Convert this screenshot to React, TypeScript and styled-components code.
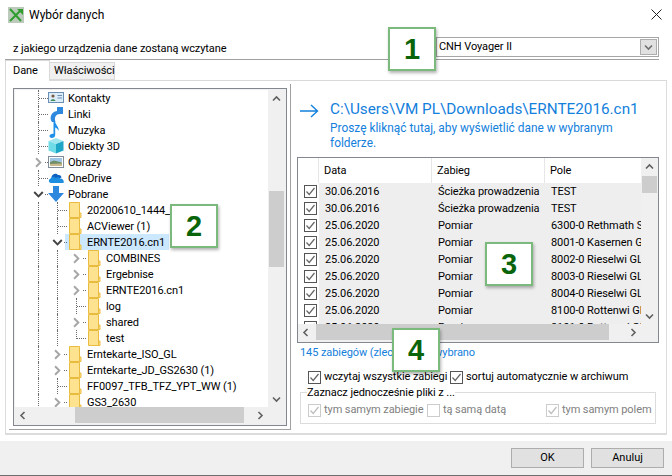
import { createGlobalStyle } from "styled-components";
import styled from "styled-components";

const GlobalStyle = createGlobalStyle`
  html, body {
    margin: 0;
    padding: 0;
    background: #fff;
  }
  * {
    box-sizing: border-box;
  }
`;

const Window = styled.div`
  position: relative;
  width: 672px;
  height: 476px;
  overflow: hidden;
  display: flex;
  flex-direction: column;
  background: #fff;
  color: #000;
  font-family: "Roboto", "Liberation Sans", sans-serif;
  font-size: 11px;
  line-height: 16px;
  letter-spacing: -0.08px;
`;

const TitleBar = styled.div`
  height: 37px;
  flex: none;
  display: flex;
  padding: 7px 10px 0 8px;
  justify-content: space-between;
`;

const TitleLeft = styled.div`
  display: flex;
  gap: 5px;
  font-size: 12px;
  letter-spacing: 0;
`;

const DeviceRow = styled.div`
  height: 23px;
  flex: none;
  margin: 0 13px 0 5px;
  padding-left: 8px;
  display: flex;
  justify-content: space-between;
  align-items: flex-start;
  border-bottom: 1px solid #a0a0a0;
`;

const DeviceLabel = styled.span`
  margin-top: 4px;
`;

const Combo = styled.div`
  width: 223px;
  height: 20px;
  padding: 1px 1px 1px 2px;
  display: flex;
  justify-content: space-between;
  align-items: center;
  border: 1px solid #a6a6a6;
  background: #fff;
`;

const ComboButton = styled.span`
  width: 17px;
  height: 16px;
  display: flex;
  align-items: center;
  justify-content: center;
  background: #e1e1e1;
  border: 1px solid #adadad;
`;

const TabStrip = styled.div`
  height: 21px;
  flex: none;
  margin: 0 5px;
  display: flex;
  align-items: flex-start;
  border-bottom: 1px solid #d9d9d9;
`;

const Tab = styled.div<{ $active?: boolean }>`
  display: flex;
  align-items: center;
  ${(p) =>
    p.$active
      ? `
    width: 45px;
    height: 21px;
    padding-left: 7px;
    background: #fff;
    border: 1px solid #d9d9d9;
    border-bottom: none;
  `
      : `
    width: 65px;
    height: 18px;
    margin-top: 2px;
    padding-left: 4px;
    background: #f0f0f0;
    border: 1px solid #d9d9d9;
    border-left: none;
  `}
`;

const TabPanel = styled.div`
  height: 354px;
  flex: none;
  margin: 0 5px;
  padding: 3px 0 3px 3px;
  display: flex;
  border: 1px solid #dcdcdc;
  border-top: none;
  border-bottom-width: 2px;
`;

const LeftPane = styled.div`
  width: 282px;
  flex: none;
  padding: 4px 3px 3px 4px;
  display: flex;
  border-right: 1px solid #a0a0a0;
  border-bottom: 1px solid #a0a0a0;
`;

const ScrollFrame = styled.div`
  flex: 1;
  min-width: 0;
  display: flex;
  flex-direction: column;
  border: 1px solid #828790;
  padding: 1px 2px 2px 1px;
  background: #f0f0f0;
`;

const ScrollBody = styled.div`
  flex: 1;
  min-height: 0;
  display: flex;
`;

const TreeView = styled.div`
  flex: 1;
  min-width: 0;
  overflow: hidden;
  background: #fff;
  white-space: nowrap;
`;

const TreeRow = styled.div`
  height: 16px;
  padding-left: 14px;
  display: flex;
`;

const Guide = styled.span<{ $line?: "full" | "half"; $tick?: "long" | "short" }>`
  position: relative;
  width: 19px;
  height: 16px;
  flex: none;
  display: flex;
  align-items: center;
  justify-content: center;
  &::before {
    content: "";
    display: ${(p) => (p.$line ? "block" : "none")};
    position: absolute;
    left: 9px;
    top: 0;
    height: ${(p) => (p.$line === "half" ? "9px" : "16px")};
    border-left: 1px dotted #6a6a6a;
  }
  &::after {
    content: "";
    display: ${(p) => (p.$tick ? "block" : "none")};
    position: absolute;
    left: ${(p) => (p.$tick === "long" ? "10px" : "16px")};
    right: 0;
    top: 8px;
    border-top: 1px dotted #6a6a6a;
  }
`;

const TreeItem = styled.span<{ $selected?: boolean }>`
  display: flex;
  align-items: center;
  gap: 4px;
  height: 16px;
  padding: 0 4px 0 2px;
  margin-left: -2px;
  background: ${(p) => (p.$selected ? "#cce8ff" : "transparent")};
`;

const TreeLabel = styled.span`
  padding-top: 1px;
  line-height: 15px;
`;

const TreeIcon = styled.span`
  width: 16px;
  height: 16px;
  flex: none;
  display: block;
`;

const VTrack = styled.div`
  width: 15px;
  flex: none;
  margin-left: 1px;
  display: flex;
  flex-direction: column;
  background: #f0f0f0;
`;

const Arrow = styled.span`
  flex: none;
  height: 16px;
  width: 15px;
  display: flex;
  align-items: center;
  justify-content: center;
`;

const VThumbArea = styled.div`
  flex: 1;
  min-height: 0;
`;

const VThumb = styled.div<{ $top: number; $height: number }>`
  margin-top: ${(p) => p.$top}px;
  height: ${(p) => p.$height}px;
  background: #cdcdcd;
`;

const HTrack = styled.div`
  height: 16px;
  flex: none;
  display: flex;
  background: #f0f0f0;
`;

const HThumbArea = styled.div`
  flex: 1;
  min-width: 0;
`;

const HThumb = styled.div<{ $left: number; $width: number }>`
  margin-left: ${(p) => p.$left}px;
  width: ${(p) => p.$width}px;
  height: 16px;
  background: #cdcdcd;
`;

const ScrollCorner = styled.span`
  width: 16px;
  flex: none;
`;

const RightPane = styled.div`
  flex: 1;
  min-width: 0;
  padding: 14px 7px 0 6px;
  display: flex;
  flex-direction: column;
  background: #fff;
`;

const PathBlock = styled.div`
  height: 59px;
  flex: none;
  display: flex;
  gap: 7px;
  padding-left: 2px;
  color: #1380dc;
`;

const PathArrow = styled.span`
  width: 24px;
  flex: none;
  padding-top: 6px;
`;

const PathText = styled.div`
  flex: 1;
  min-width: 0;
`;

const PathTitle = styled.div`
  font-size: 15.3px;
  line-height: 22px;
  letter-spacing: 0;
  white-space: nowrap;
`;

const PathHint = styled.div`
  font-size: 11.9px;
  line-height: 15px;
  letter-spacing: 0;
  margin-top: 1px;
`;

const GridBox = styled.div`
  height: 186px;
  flex: none;
  display: flex;
  flex-direction: column;
  border: 1px solid #828790;
  padding: 0 1px 2px 0;
  background: #f0f0f0;
`;

const DataGrid = styled.div`
  flex: 1;
  min-width: 0;
  overflow: hidden;
  background: #fff;
`;

const GridHeader = styled.div`
  height: 25px;
  display: grid;
  grid-template-columns: 21px 113px 113px 1fr;
  background: #fff;
`;

const HeaderCell = styled.div`
  padding-left: 5px;
  display: flex;
  align-items: center;
  border-right: 1px solid #e6e6e6;
  &:first-child {
    padding-left: 0;
  }
  &:last-child {
    border-right: none;
  }
`;

const GridRow = styled.div`
  height: 17px;
  display: grid;
  grid-template-columns: 21px 113px 113px 1fr;
  white-space: nowrap;
`;

const CheckCell = styled.div`
  padding-left: 6px;
  display: flex;
  align-items: center;
  background: #fff;
`;

const Cell = styled.div`
  padding: 1px 0 0 6px;
  overflow: hidden;
  background: #eeeeee;
  display: flex;
  align-items: center;
`;

const Box = styled.span<{ $disabled?: boolean }>`
  width: 13px;
  height: 13px;
  flex: none;
  display: flex;
  align-items: center;
  justify-content: center;
  background: #fff;
  border: 1px solid ${(p) => (p.$disabled ? "#cccccc" : "#555555")};
`;

const StatusLine = styled.div`
  height: 16px;
  margin-top: 2px;
  padding-left: 3px;
  color: #1380dc;
  flex: none;
  white-space: nowrap;
`;

const Options = styled.div`
  margin-top: 8px;
  height: 16px;
  padding-left: 11px;
  display: flex;
  flex: none;
`;

const CheckLabel = styled.label<{ $disabled?: boolean }>`
  display: flex;
  align-items: center;
  gap: 3px;
  white-space: nowrap;
  color: ${(p) => (p.$disabled ? "#808080" : "#000")};
`;

const OptionSlot = styled.div<{ $width: number }>`
  width: ${(p) => p.$width}px;
  flex: none;
  display: flex;
`;

const SameGroup = styled.fieldset`
  margin: 0 3px 0 3px;
  padding: 3px 0 0 7px;
  height: 39px;
  flex: none;
  border: 1px solid #dcdcdc;
  display: grid;
  grid-template-columns: 119px 119px 1fr;
  align-items: start;
`;

const SameLegend = styled.legend`
  padding: 0;
  margin-left: -1px;
  line-height: 15px;
  height: 14px;
`;

const Spacer = styled.div`
  height: 6px;
  flex: none;
`;

const Footer = styled.div`
  flex: 1;
  padding: 7px 8px 0 0;
  display: flex;
  justify-content: flex-end;
  gap: 7px;
  background: #f0f0f0;
  border-bottom: 1px solid #6e6e6e;
`;

const FooterButton = styled.button`
  width: 73px;
  height: 20px;
  padding: 0;
  background: #e1e1e1;
  border: 1px solid #adadad;
  color: #000;
  font: inherit;
`;

const CloseGlyph = styled.svg`
  margin-top: 2px;
`;

const Badge = styled.div<{ $x: number; $y: number }>`
  position: absolute;
  left: ${(p) => p.$x}px;
  top: ${(p) => p.$y}px;
  width: 48px;
  height: 44px;
  display: flex;
  align-items: center;
  justify-content: center;
  background: #fff;
  border: 2px solid #7cb97c;
  box-shadow: 1px 2px 3px rgba(0, 0, 0, 0.3);
  color: #0a640a;
  font-family: "Liberation Sans", Arial, sans-serif;
  font-size: 29px;
  font-weight: 700;
`;

function Chevron({ dir, color = "#6b6b6b", size = 9 }: { dir: "up" | "down" | "left" | "right"; color?: string; size?: number }) {
  const points = {
    up: "1,6.5 4.5,3 8,6.5",
    down: "1,2.5 4.5,6 8,2.5",
    left: "6.5,1 3,4.5 6.5,8",
    right: "2.5,1 6,4.5 2.5,8",
  }[dir];
  return (
    <svg width={size} height={size} viewBox="0 0 9 9">
      <polyline points={points} fill="none" stroke={color} strokeWidth="1.6" />
    </svg>
  );
}

function Check({ disabled }: { disabled?: boolean }) {
  return (
    <svg width="11" height="11" viewBox="0 0 11 11">
      <polyline points="1.5,5.5 4.2,8.5 9.5,2" fill="none" stroke={disabled ? "#bdbdbd" : "#666"} strokeWidth="1.2" />
    </svg>
  );
}

function AppIcon() {
  return (
    <svg width="16" height="16" viewBox="0 0 16 16">
      <rect width="16" height="16" fill="#bccabc" />
      <path d="M2 2 L13 14 M2 14 L13 3" stroke="#2f9e2f" strokeWidth="2" fill="none" />
      <path d="M9 2 H15 V8 Z" fill="#2f9e2f" />
    </svg>
  );
}

function FolderIcon() {
  return (
    <svg width="16" height="16" viewBox="0 0 16 16">
      <path d="M2.5 .5 H12.5 V11 H14 V15.5 H2.5 Z" fill="#fde38f" stroke="#e9bc3f" />
      <path d="M12.5 11 V15" stroke="#e9bc3f" />
    </svg>
  );
}

const specialIcons: Record<string, React.ReactNode> = {
  contacts: (
    <svg width="16" height="16" viewBox="0 0 16 16">
      <rect x=".5" y="2.5" width="15" height="10" fill="#dcecf8" stroke="#6a8fb5" />
      <circle cx="5" cy="6" r="1.6" fill="#7a5a3c" />
      <path d="M2.5 11 C3 8.5 7 8.5 7.5 11 Z" fill="#3d8a5a" />
      <path d="M9.5 5.5 H14 M9.5 8 H14" stroke="#6a8fb5" />
    </svg>
  ),
  link: (
    <svg width="16" height="16" viewBox="0 0 16 16">
      <path d="M4 16 C1 12 3 6 9 5 V1 H15 V8 H12 C8 8 6 11 7.5 16 Z" fill="#2e88dd" />
    </svg>
  ),
  music: (
    <svg width="16" height="16" viewBox="0 0 16 16">
      <path d="M5.5 0 H7.2 C7.5 3 11.5 5 10.5 9 C10 7 8.5 6 7.2 5.5 V13 C7.2 15 5.5 16 3.8 16 C2.5 16 1.5 15.2 1.5 14 C1.5 12.5 3.5 11.3 5.5 11.8 Z" fill="#1e90ea" />
    </svg>
  ),
  cube: (
    <svg width="16" height="16" viewBox="0 0 16 16">
      <path d="M8 0 L15.5 3 L8 6 L.5 3 Z" fill="#9fe6ee" />
      <path d="M.5 3 L8 6 V15.5 L.5 12.5 Z" fill="#6fdbe6" />
      <path d="M15.5 3 L8 6 V15.5 L15.5 12.5 Z" fill="#1da6c6" />
    </svg>
  ),
  image: (
    <svg width="16" height="16" viewBox="0 0 16 16">
      <rect x=".5" y="2.5" width="15" height="11" fill="#fff" stroke="#7f8c98" />
      <rect x="2" y="4" width="12" height="4" fill="#9fc6e4" />
      <path d="M2 8 L6 6.5 L14 8.5 V12 H2 Z" fill="#6f8f6a" />
      <path d="M2 10 L14 9.5 V12 H2 Z" fill="#c9b98a" />
    </svg>
  ),
  cloud: (
    <svg width="16" height="16" viewBox="0 0 16 16">
      <path d="M3.5 7 C4 4 8 2.5 10 5 C12 4.5 13.5 6 13.5 7.5 L6 11 Z" fill="#0f62c0" />
      <path d="M3 13 C.5 13 0 9.5 2.5 8.8 C3 6.5 6 6 7.5 8 C10 6.5 11.5 7.5 12 8.5 C14.5 8 16.5 10.5 15.5 13 Z" fill="#1e8fe0" />
    </svg>
  ),
  download: (
    <svg width="16" height="16" viewBox="0 0 16 16">
      <path d="M5 0 H11 V7 H16 L8 16 L0 7 H5 Z" fill="#2e88dd" />
    </svg>
  ),
};

type TreeEntry = {
  label: string;
  guides: ("full" | "half" | undefined)[];
  expander?: "open" | "closed";
  icon?: string;
  selected?: boolean;
};

const treeEntries: TreeEntry[] = [
  { label: "Kontakty", guides: ["full"], icon: "contacts" },
  { label: "Linki", guides: ["full"], icon: "link" },
  { label: "Muzyka", guides: ["full"], icon: "music" },
  { label: "Obiekty 3D", guides: ["full"], icon: "cube" },
  { label: "Obrazy", guides: [undefined], expander: "closed", icon: "image" },
  { label: "OneDrive", guides: ["full"], icon: "cloud" },
  { label: "Pobrane", guides: [undefined], expander: "open", icon: "download" },
  { label: "20200610_1444_", guides: ["full", "full"] },
  { label: "ACViewer (1)", guides: ["full", "full"] },
  { label: "ERNTE2016.cn1", guides: ["full", undefined], expander: "open", selected: true },
  { label: "COMBINES", guides: ["full", "full", undefined], expander: "closed" },
  { label: "Ergebnise", guides: ["full", "full", undefined], expander: "closed" },
  { label: "ERNTE2016.cn1", guides: ["full", "full", undefined], expander: "closed" },
  { label: "log", guides: ["full", "full", "full"] },
  { label: "shared", guides: ["full", "full", undefined], expander: "closed" },
  { label: "test", guides: ["full", "full", "half"] },
  { label: "Erntekarte_ISO_GL", guides: ["full", undefined], expander: "closed" },
  { label: "Erntekarte_JD_GS2630 (1)", guides: ["full", undefined], expander: "closed" },
  { label: "FF0097_TFB_TFZ_YPT_WW (1)", guides: ["full", "full"] },
  { label: "GS3_2630", guides: ["full", undefined], expander: "closed" },
];

const gridRows = [
  ["30.06.2016", "Ścieżka prowadzenia", "TEST"],
  ["30.06.2016", "Ścieżka prowadzenia", "TEST"],
  ["25.06.2020", "Pomiar", "6300-0 Rethmath Süd"],
  ["25.06.2020", "Pomiar", "8001-0 Kasernen GL"],
  ["25.06.2020", "Pomiar", "8002-0 Rieselwi GL"],
  ["25.06.2020", "Pomiar", "8003-0 Rieselwi GL"],
  ["25.06.2020", "Pomiar", "8004-0 Rieselwi GL"],
  ["25.06.2020", "Pomiar", "8100-0 Rottenwi GL"],
  ["25.06.2020", "Pomiar", "8101-0 Rottenwi GL"],
];

function TreeLine({ entry }: { entry: TreeEntry }) {
  const last = entry.guides.length - 1;
  return (
    <TreeRow>
      {entry.guides.map((line, i) => (
        <Guide
          key={i}
          $line={line}
          $tick={i === last ? (entry.expander ? "short" : "long") : undefined}
        >
          {i === last && entry.expander === "open" && <Chevron dir="down" color="#444" size={11} />}
          {i === last && entry.expander === "closed" && <Chevron dir="right" color="#a6a6a6" size={11} />}
        </Guide>
      ))}
      <TreeItem $selected={entry.selected}>
        <TreeIcon>{entry.icon ? specialIcons[entry.icon] : <FolderIcon />}</TreeIcon>
        <TreeLabel>{entry.label}</TreeLabel>
      </TreeItem>
    </TreeRow>
  );
}

function VScroll({ top, height }: { top: number; height: number }) {
  return (
    <VTrack>
      <Arrow>
        <Chevron dir="up" color="#606060" />
      </Arrow>
      <VThumbArea>
        <VThumb $top={top} $height={height} />
      </VThumbArea>
      <Arrow>
        <Chevron dir="down" color="#606060" />
      </Arrow>
    </VTrack>
  );
}

function HScroll({ left, width }: { left: number; width: number }) {
  return (
    <HTrack>
      <Arrow>
        <Chevron dir="left" color="#606060" />
      </Arrow>
      <HThumbArea>
        <HThumb $left={left} $width={width} />
      </HThumbArea>
      <Arrow>
        <Chevron dir="right" color="#606060" />
      </Arrow>
      <ScrollCorner />
    </HTrack>
  );
}

function Option({ label, disabled, checked = true }: { label: string; disabled?: boolean; checked?: boolean }) {
  return (
    <CheckLabel $disabled={disabled}>
      <Box $disabled={disabled}>{checked && <Check disabled={disabled} />}</Box>
      {label}
    </CheckLabel>
  );
}

export default function App() {
  return (
    <>
      <GlobalStyle />
      <Window>
        <TitleBar>
          <TitleLeft>
            <AppIcon />
            <span>Wybór danych</span>
          </TitleLeft>
          <CloseGlyph width="11" height="11" viewBox="0 0 11 11">
            <path d="M.5 .5 L10.5 10.5 M10.5 .5 L.5 10.5" stroke="#222" fill="none" />
          </CloseGlyph>
        </TitleBar>

        <DeviceRow>
          <DeviceLabel>z jakiego urządzenia dane zostaną wczytane</DeviceLabel>
          <Combo>
            CNH Voyager II
            <ComboButton>
              <Chevron dir="down" color="#707070" />
            </ComboButton>
          </Combo>
        </DeviceRow>

        <TabStrip>
          <Tab $active>Dane</Tab>
          <Tab>Właściwości</Tab>
        </TabStrip>

        <TabPanel>
          <LeftPane>
            <ScrollFrame>
              <ScrollBody>
                <TreeView>
                  {treeEntries.map((entry, i) => (
                    <TreeLine key={i} entry={entry} />
                  ))}
                </TreeView>
                <VScroll top={85} height={76} />
              </ScrollBody>
              <HScroll left={45} width={169} />
            </ScrollFrame>
          </LeftPane>

          <RightPane>
            <PathBlock>
              <PathArrow>
                <svg width="20" height="14" viewBox="0 0 20 14">
                  <path d="M1 7 H18 M12 1 L18.5 7 L12 13" fill="none" stroke="#1380dc" strokeWidth="1.4" />
                </svg>
              </PathArrow>
              <PathText>
                <PathTitle>C:\Users\VM PL\Downloads\ERNTE2016.cn1</PathTitle>
                <PathHint>Proszę kliknąć tutaj, aby wyświetlić dane w wybranym folderze.</PathHint>
              </PathText>
            </PathBlock>

            <GridBox>
              <ScrollBody>
                <DataGrid>
                  <GridHeader>
                    <HeaderCell />
                    <HeaderCell>Data</HeaderCell>
                    <HeaderCell>Zabieg</HeaderCell>
                    <HeaderCell>Pole</HeaderCell>
                  </GridHeader>
                  {gridRows.map((row, i) => (
                    <GridRow key={i}>
                      <CheckCell>
                        <Box>
                          <Check />
                        </Box>
                      </CheckCell>
                      <Cell>{row[0]}</Cell>
                      <Cell>{row[1]}</Cell>
                      <Cell>{row[2]}</Cell>
                    </GridRow>
                  ))}
                </DataGrid>
                <VScroll top={2} height={17} />
              </ScrollBody>
              <HScroll left={3} width={293} />
            </GridBox>

            <StatusLine>145 zabiegów (zleceń), 145 wybrano</StatusLine>

            <Options>
              <OptionSlot $width={142}>
                <Option label="wczytaj wszystkie zabiegi" />
              </OptionSlot>
              <OptionSlot $width={200}>
                <Option label="sortuj automatycznie w archiwum" />
              </OptionSlot>
            </Options>

            <SameGroup>
              <SameLegend>Zaznacz jednocześnie pliki z ...</SameLegend>
              <Option label="tym samym zabiegie" disabled />
              <Option label="tą samą datą" disabled checked={false} />
              <Option label="tym samym polem" disabled />
            </SameGroup>
          </RightPane>
        </TabPanel>

        <Spacer />

        <Footer>
          <FooterButton>OK</FooterButton>
          <FooterButton>Anuluj</FooterButton>
        </Footer>

        <Badge $x={388} $y={27}>1</Badge>
        <Badge $x={170} $y={204}>2</Badge>
        <Badge $x={485} $y={242}>3</Badge>
        <Badge $x={392} $y={328}>4</Badge>
      </Window>
    </>
  );
}
